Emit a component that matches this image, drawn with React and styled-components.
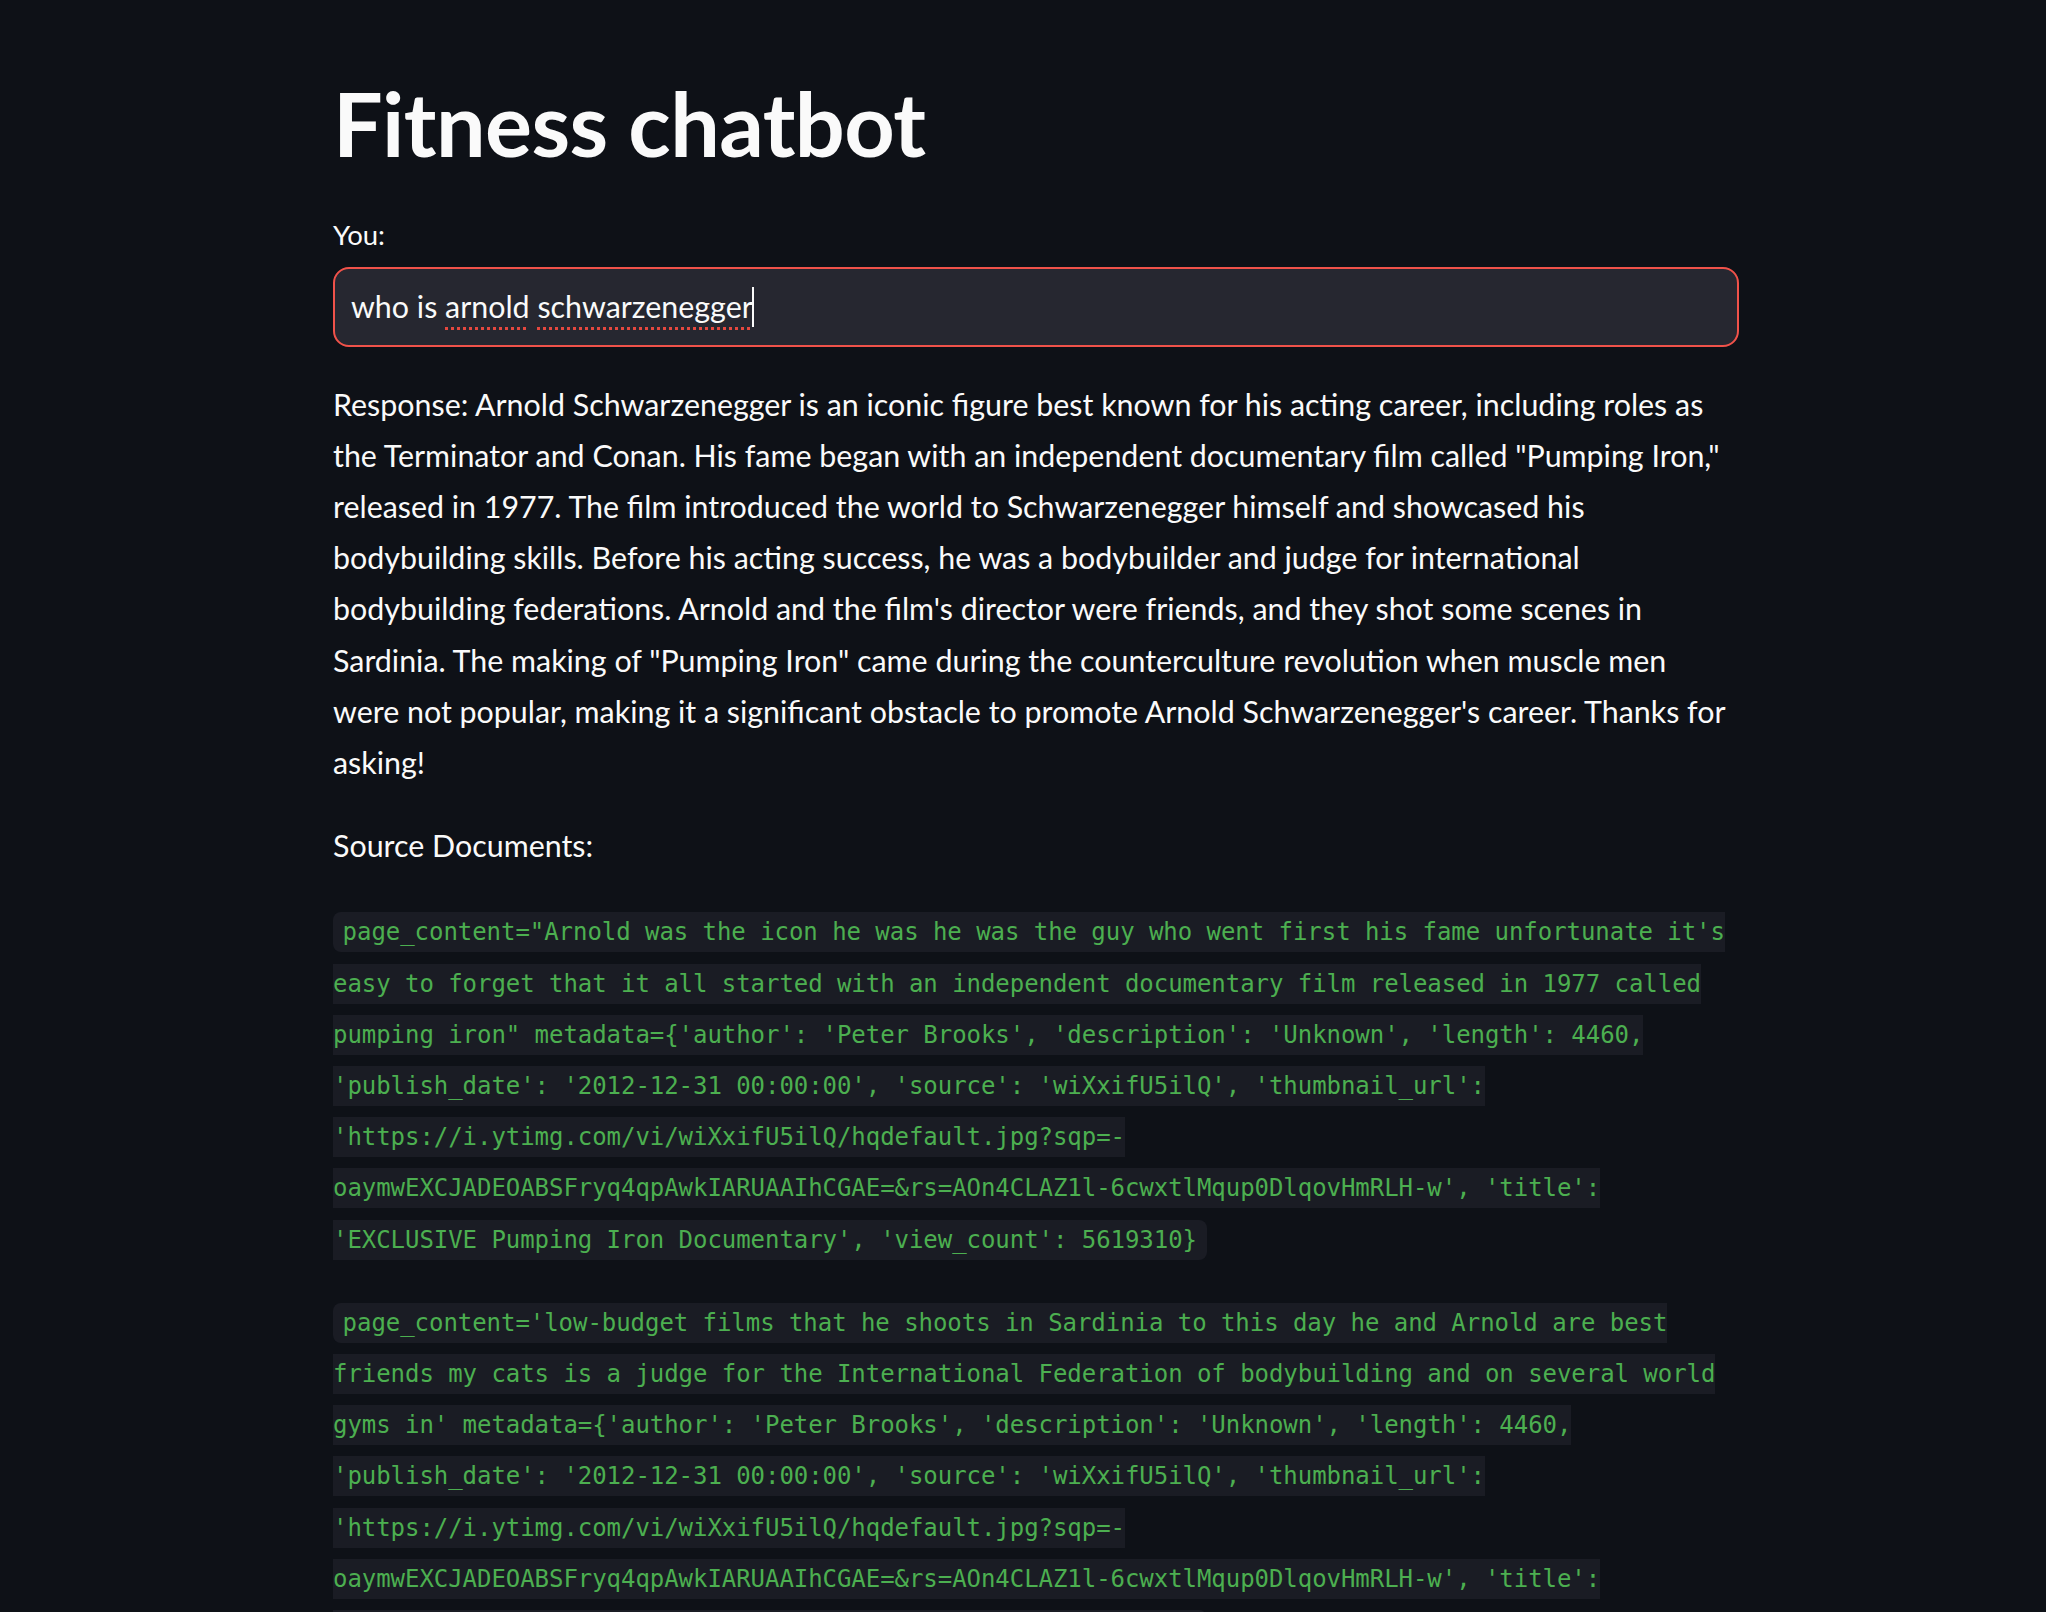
import React from 'react';
import styled, { createGlobalStyle } from 'styled-components';

const GlobalStyle = createGlobalStyle`
    html, body {
        margin: 0;
        padding: 0;
        background: #0e1117;
    }
    body {
        color: #fafafa;
        font-family: Lato, "Noto Sans", sans-serif;
    }
`;

const Main = styled.main`
    box-sizing: border-box;
    width: 2046px;
    min-height: 1612px;
    padding: 71px 307px 0 333px;
`;

const Title = styled.h1`
    margin: 0 0 41px;
    font-size: 88px;
    font-weight: 700;
    line-height: 1.2;
    letter-spacing: -0.6px;
`;

const Label = styled.label`
    display: block;
    font-size: 27.5px;
    line-height: 34px;
    margin: 0 0 15px;
`;

const InputBox = styled.div`
    box-sizing: border-box;
    height: 80px;
    display: flex;
    align-items: center;
    padding: 0 16px;
    border: 2px solid #f0524a;
    border-radius: 16px;
    background: #262730;
    font-size: 30.4px;
    margin-bottom: 32px;
`;

const Misspelled = styled.span`
    text-decoration: underline dotted #e5483f;
    text-decoration-thickness: 3px;
    text-underline-offset: 9px;
`;

const Caret = styled.span`
    display: inline-block;
    width: 2px;
    height: 40px;
    margin-left: -1px;
    background: #fafafa;
    vertical-align: -9px;
`;

const Para = styled.p`
    margin: 0 0 32px;
    font-size: 30.4px;
    line-height: 51.2px;
    white-space: ${p => (p.$lines ? 'nowrap' : 'normal')};
`;

const CodePara = styled.p`
    margin: 0 0 28px;
    padding-top: 4px;
    font-family: "DejaVu Sans Mono", "Liberation Mono", monospace;
    font-size: 24px;
    line-height: 51.2px;
`;

const Code = styled.code`
    font-family: inherit;
    font-size: inherit;
    letter-spacing: -0.05px;
    color: #4caf50;
    background: #1a1c24;
    padding: 6px 9.6px;
    border-radius: 8px;
    overflow-wrap: break-word;
`;

const responseLines = [
    'Response: Arnold Schwarzenegger is an iconic figure best known for his acting career, including roles as',
    'the Terminator and Conan. His fame began with an independent documentary film called "Pumping Iron,"',
    'released in 1977. The film introduced the world to Schwarzenegger himself and showcased his',
    'bodybuilding skills. Before his acting success, he was a bodybuilder and judge for international',
    "bodybuilding federations. Arnold and the film's director were friends, and they shot some scenes in",
    'Sardinia. The making of "Pumping Iron" came during the counterculture revolution when muscle men',
    "were not popular, making it a significant obstacle to promote Arnold Schwarzenegger's career. Thanks for",
    'asking!',
];

const meta = "metadata={'author': 'Peter Brooks', 'description': 'Unknown', 'length': 4460, 'publish_date': '2012-12-31 00:00:00', 'source': 'wiXxifU5ilQ', 'thumbnail_url': 'https://i.ytimg.com/vi/wiXxifU5ilQ/hqdefault.jpg?sqp=-oaymwEXCJADEOABSFryq4qpAwkIARUAAIhCGAE=&rs=AOn4CLAZ1l-6cwxtlMqup0DlqovHmRLH-w', 'title': 'EXCLUSIVE Pumping Iron Documentary', 'view_count': 5619310}";

const sources = [
    `page_content="Arnold was the icon he was he was the guy who went first his fame unfortunate it's easy to forget that it all started with an independent documentary film released in 1977 called pumping iron" ${meta}`,
    `page_content='low-budget films that he shoots in Sardinia to this day he and Arnold are best friends my cats is a judge for the International Federation of bodybuilding and on several world gyms in' ${meta}`,
];

export default function App() {
    return (
        <>
            <GlobalStyle />
            <Main>
                <Title>Fitness chatbot</Title>
                <Label>You:</Label>
                <InputBox>
                    <span>
                        who is <Misspelled>arnold</Misspelled> <Misspelled>schwarzenegger</Misspelled>
                        <Caret />
                    </span>
                </InputBox>
                <Para $lines>
                    {responseLines.map((line, i) => (
                        <React.Fragment key={i}>
                            {line}
                            {i < responseLines.length - 1 && <br />}
                        </React.Fragment>
                    ))}
                </Para>
                <Para>Source Documents:</Para>
                {sources.map((s, i) => (
                    <CodePara key={i}>
                        <Code>{s}</Code>
                    </CodePara>
                ))}
            </Main>
        </>
    );
}
